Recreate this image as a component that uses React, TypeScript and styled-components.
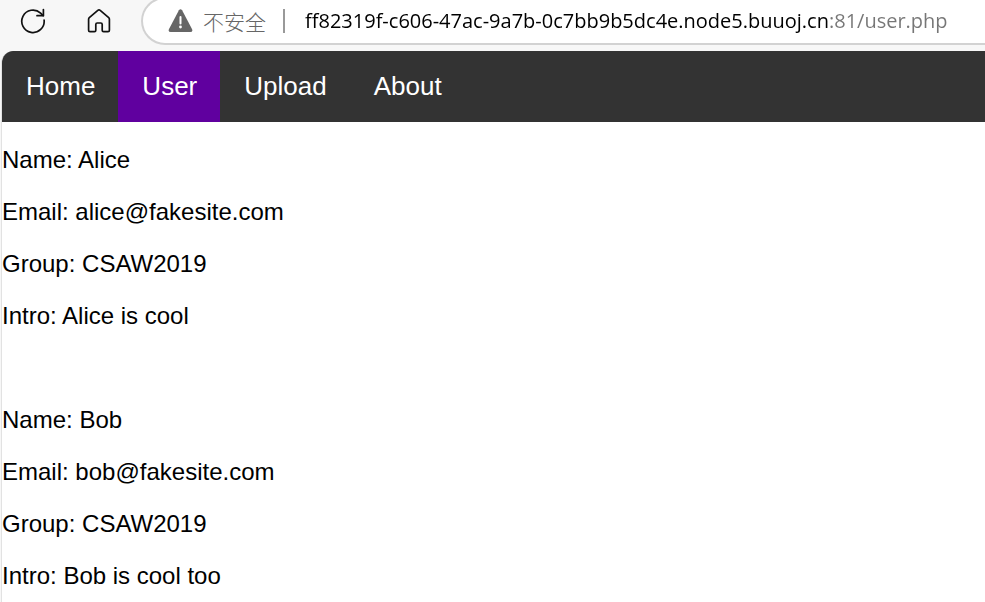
import React, { useState } from "react";
import styled, { createGlobalStyle } from "styled-components";

const GlobalStyle = createGlobalStyle`
  * { box-sizing: border-box; }
  body {
    margin: 0;
    background: #f7f7f7;
    color: #000;
    font-family: "Liberation Sans", Arial, sans-serif;
    overflow: hidden;
  }
`;

const Window = styled.div`
  display: flex;
  flex-direction: column;
  min-height: 100vh;
`;

const Toolbar = styled.header`
  display: flex;
  align-items: flex-start;
  padding: 0 0 6px 12px;
  overflow: hidden;
`;

const IconButton = styled.button`
  display: flex;
  align-items: center;
  justify-content: center;
  flex: none;
  width: 42px;
  height: 42px;
  margin-right: 24px;
  padding: 0;
  border: 0;
  background: none;
  color: #111;
`;

const AddressBar = styled.div`
  display: flex;
  align-items: center;
  flex: 1;
  min-width: 0;
  height: 48px;
  margin: -3px 0 0 -3px;
  padding-left: 25px;
  border: 2px solid #d2d2d2;
  border-right: 0;
  border-radius: 24px 0 0 24px;
  background: #fff;
`;

const SiteInfo = styled.button`
  display: flex;
  align-items: center;
  flex: none;
  gap: 10px;
  height: 32px;
  padding: 0;
  border: 0;
  background: none;
  color: #666;
  font: 300 21px/30px "Noto Sans CJK SC", sans-serif;
`;

const Divider = styled.span`
  flex: none;
  width: 2px;
  height: 24px;
  margin: 0 20px 0 17px;
  background: #999;
`;

const AddressInput = styled.input<{ $hostWidth: number }>`
  flex: 1;
  min-width: 0;
  height: 32px;
  padding: 0;
  border: 0;
  outline: 0;
  font: 20px/32px "Open Sans", "Segoe UI", sans-serif;
  color: transparent;
  caret-color: #000;
  background: linear-gradient(
    to right,
    #000 ${(p) => p.$hostWidth}px,
    #767676 ${(p) => p.$hostWidth}px
  );
  background-clip: text;
  -webkit-background-clip: text;
`;

const Page = styled.div`
  flex: 1;
  margin-left: 1px;
  border-left: 1px solid #e2e2e2;
  border-top-left-radius: 12px;
  background: #fff;
  overflow: hidden;
`;

const Nav = styled.nav`
  display: flex;
  background: #333;
`;

const NavLink = styled.a<{ $active?: boolean }>`
  padding: 20px 23px 21px 24px;
  background: ${(p) => (p.$active ? "#60009f" : "transparent")};
  color: #fff;
  font-size: 26px;
  line-height: 30px;
  text-decoration: none;
`;

const Profiles = styled.main`
  display: flex;
  flex-direction: column;
  gap: 76px;
  padding-top: 24px;
  font-size: 24px;
  line-height: 28px;
`;

const Profile = styled.section`
  display: flex;
  flex-direction: column;
  gap: 24px;
`;

const Field = styled.p`
  margin: 0;
`;

const pages = [
  { label: "Home", href: "#home" },
  { label: "User", href: "#user" },
  { label: "Upload", href: "#upload" },
  { label: "About", href: "#about" },
];

const users = [
  { Name: "Alice", Email: "alice@fakesite.com", Group: "CSAW2019", Intro: "Alice is cool" },
  { Name: "Bob", Email: "bob@fakesite.com", Group: "CSAW2019", Intro: "Bob is cool too" },
];

const ReloadIcon = () => (
  <svg width="26" height="26" viewBox="0 0 26 26" fill="none" stroke="currentColor" strokeWidth="1.7" strokeLinecap="round" aria-hidden="true">
    <path d="M24.1 12A11.2 11.2 0 1 1 20.6 5.1L23.2 7.6" />
    <path d="M23.4 1.5V7.7H17" strokeLinejoin="round" />
  </svg>
);

const HomeIcon = () => (
  <svg width="24" height="26" viewBox="0 0 24 26" fill="none" stroke="currentColor" strokeWidth="1.7" strokeLinejoin="round" aria-hidden="true">
    <path d="M10.8 2.3Q12 1.3 13.2 2.3L21.7 9.6Q22.4 10.2 22.4 11.2V22.2Q22.4 23.6 21 23.6H16.6Q15.2 23.6 15.2 22.2V16.4Q15.2 15 13.8 15H10.2Q8.8 15 8.8 16.4V22.2Q8.8 23.6 7.4 23.6H3Q1.6 23.6 1.6 22.2V11.2Q1.6 10.2 2.3 9.6Z" />
  </svg>
);

const WarningIcon = () => (
  <svg width="25" height="24" viewBox="0 0 25 24" aria-hidden="true">
    <path d="M10.9 1.2Q12.5-.8 14.1 1.2L24.1 20.2Q25 23 22.3 23H2.7Q0 23 .9 20.2Z" fill="#666" />
    <path d="M12.5 8V14.5" stroke="#fff" strokeWidth="2" strokeLinecap="round" />
    <circle cx="12.5" cy="18" r="1.4" fill="#fff" />
  </svg>
);

export default function App() {
  const [address, setAddress] = useState("ff82319f-c606-47ac-9a7b-0c7bb9b5dc4e.node5.buuoj.cn:81/user.php");

  return (
    <>
      <GlobalStyle />
      <Window>
        <Toolbar>
          <IconButton aria-label="Reload"><ReloadIcon /></IconButton>
          <IconButton aria-label="Home page"><HomeIcon /></IconButton>
          <AddressBar>
            <SiteInfo><WarningIcon />不安全</SiteInfo>
            <Divider />
            <AddressInput
              aria-label="Address"
              $hostWidth={524}
              spellCheck={false}
              value={address}
              onChange={(e) => setAddress(e.target.value)}
            />
          </AddressBar>
        </Toolbar>
        <Page>
          <Nav>
            {pages.map((page) => (
              <NavLink key={page.label} href={page.href} $active={page.label === "User"}>
                {page.label}
              </NavLink>
            ))}
          </Nav>
          <Profiles>
            {users.map((user) => (
              <Profile key={user.Name}>
                {Object.entries(user).map(([label, value]) => (
                  <Field key={label}>{label}: {value}</Field>
                ))}
              </Profile>
            ))}
          </Profiles>
        </Page>
      </Window>
    </>
  );
}
